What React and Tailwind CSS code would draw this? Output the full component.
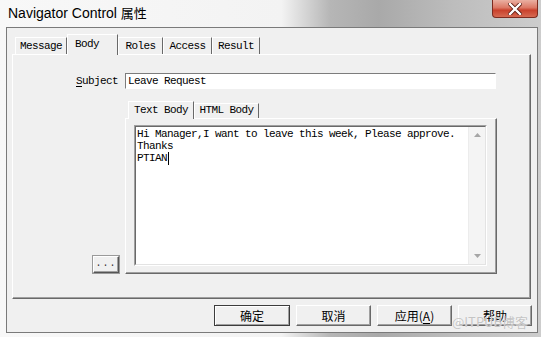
const mono = "font-['Liberation_Mono',monospace] text-[11px] tracking-[-0.6px]";
const cjk = "font-['Noto_Sans_CJK_SC',sans-serif] text-[12px]";

const tabs = [
  { label: "Message", w: "w-[52px]" },
  { label: "Body", w: "w-[51px]", active: true },
  { label: "Roles", w: "w-[45px]" },
  { label: "Access", w: "w-[49px]" },
  { label: "Result", w: "w-[48px]" },
];

function Tab({ label, w, active }) {
  if (active) {
    return (
      <div
        className={`${w} h-[21px] -mb-px relative z-10 bg-[#f0f0f0] border-t border-l border-white border-r border-r-[#696969] flex items-start pl-[7px] pt-[1px] ${mono} text-black`}
      >
        {label}
      </div>
    );
  }
  return (
    <div
      className={`${w} h-[17px] bg-[#f0f0f0] border-t border-l border-white border-r border-r-[#696969] flex items-center justify-center ${mono} text-black`}
    >
      {label}
    </div>
  );
}

function Button({ children, w, isDefault }) {
  return (
    <div
      className={`${w} h-[21px] flex items-center justify-center ${cjk} text-black bg-[#f0f0f0] ${
        isDefault
          ? "border border-[#3c3c3c] shadow-[inset_1px_1px_0_#ffffff,inset_-1px_-1px_0_#a0a0a0]"
          : "border-t border-l border-white border-b border-r border-b-[#696969] border-r-[#696969] shadow-[inset_-1px_-1px_0_#a0a0a0]"
      }`}
    >
      {children}
    </div>
  );
}

export default function App() {
  return (
    <div className="relative w-[541px] h-[337px] overflow-hidden bg-[linear-gradient(90deg,#f8f8f8_0%,#f3f3f3_52%,#b6b6b6_61%,#a9a9a9_70%,#bdbdbd_84%,#cdcdcd_100%)]">
      {/* title bar */}
      <div className="h-[27px] flex items-start pl-[8px] pt-[4px] text-black">
        <span className="font-['Liberation_Sans',sans-serif] text-[14px] leading-[18px]">
          Navigator Control&nbsp;
        </span>
        <span className="font-['Noto_Sans_CJK_SC',sans-serif] text-[13px] leading-[18px]">属性</span>
      </div>

      <div className="absolute top-0 right-[3px] w-[46px] h-[18px] rounded-b-[4px] border border-t-0 border-[#7d2b1f] bg-[linear-gradient(180deg,#eab0a2_0%,#dc7865_45%,#c9412c_60%,#d66a52_100%)] flex items-center justify-center">
        <svg width="14" height="12" viewBox="0 0 14 12">
          <path d="M2 1 L12 11 M12 1 L2 11" stroke="#5a1a10" strokeWidth="4" strokeLinecap="square" />
          <path d="M2 1 L12 11 M12 1 L2 11" stroke="#ffffff" strokeWidth="2.4" strokeLinecap="square" />
        </svg>
      </div>

      {/* dialog */}
      <div className="ml-[6px] w-[532px] h-[306px] border border-[#7a7a7a] bg-[#f0f0f0] flex flex-col">
        <div className="mt-[6px] h-[20px] pl-[8px] flex items-end">
          {tabs.map((t) => (
            <Tab key={t.label} {...t} />
          ))}
        </div>

        <div className="ml-[5px] w-[519px] h-[245px] border-t border-l border-white border-r border-b border-r-[#696969] border-b-[#696969] shadow-[inset_-1px_-1px_0_#a0a0a0] flex flex-col">
          <div className="pt-[18px] pl-[63px] flex items-center">
            <span className={`${mono} text-black`}>
              <span className="underline underline-offset-2">S</span>ubject
            </span>
            <div className="ml-[7px] w-[371px] h-[16px] bg-white border-t border-l border-[#7c7c7c] border-b border-r border-b-white border-r-white flex items-center pl-[2px]">
              <span className={`${mono} text-black`}>Leave Request</span>
            </div>
          </div>

          <div className="mt-[11px] pl-[80px] flex items-end">
            <div className="mb-[1px] w-[26px] h-[17px] bg-[#f0f0f0] border-t border-l border-white border-b border-r border-b-[#555555] border-r-[#555555] shadow-[inset_-1px_-1px_0_#a0a0a0,0_0_0_1px_#9a9a9a] flex items-center justify-center">
              <span className="font-['Liberation_Mono',monospace] text-[10px] leading-none text-[#333] tracking-[1px]">...</span>
            </div>

            <div className="ml-[6px] flex flex-col">
              <div className="h-[17px] pl-[3px] flex items-end">
                <div className={`w-[66px] h-[18px] -mb-px relative z-10 bg-[#f0f0f0] border-t border-l border-white border-r border-r-[#696969] flex items-start justify-center ${mono} text-black`}>
                  Text Body
                </div>
                <div className={`w-[65px] h-[15px] bg-[#f0f0f0] border-t border-l border-white border-r border-r-[#696969] flex items-center justify-center ${mono} text-black`}>
                  HTML Body
                </div>
              </div>

              <div className="w-[372px] h-[156px] border-t border-l border-white border-r border-b border-r-[#696969] border-b-[#696969] shadow-[inset_-1px_-1px_0_#a0a0a0] pl-[8px] pt-[6px]">
                <div className="w-[353px] h-[141px] border-t border-l border-[#a0a0a0] border-b border-r border-b-white border-r-white">
                  <div className="w-full h-full border-t border-l border-[#696969] border-b border-r border-b-[#e3e3e3] border-r-[#e3e3e3] bg-white flex">
                    <div className={`flex-1 pl-[1px] pt-[1px] ${mono} leading-[12px] text-black`}>
                      <div>Hi Manager,I want to leave this week, Please approve.</div>
                      <div>Thanks</div>
                      <div className="flex items-center">
                        PTIAN<span className="inline-block w-px h-[13px] bg-black ml-px" />
                      </div>
                    </div>
                    <div className="w-[17px] h-full bg-[#f4f4f4] border-l border-[#ececec] flex flex-col items-center justify-between py-[6px]">
                      <svg width="7" height="4" viewBox="0 0 7 4">
                        <path d="M0 4 L3.5 0 L7 4 Z" fill="#a6a6a6" />
                      </svg>
                      <svg width="7" height="4" viewBox="0 0 7 4">
                        <path d="M0 0 L3.5 4 L7 0 Z" fill="#a6a6a6" />
                      </svg>
                    </div>
                  </div>
                </div>
              </div>
            </div>
          </div>
        </div>

        <div className="mt-[6px] pr-[5px] flex justify-end gap-[6px]">
          <Button w="w-[76px]" isDefault>确定</Button>
          <Button w="w-[75px]">取消</Button>
          <Button w="w-[75px]">
            应用(<span className="underline underline-offset-2">A</span>)
          </Button>
          <Button w="w-[74px]">帮助</Button>
        </div>
      </div>

      <div className="absolute left-[452px] top-[312px] font-['Noto_Sans_CJK_SC',sans-serif] text-[13px] text-[#c4c4c4] [text-shadow:0_0_1px_#ffffff]">
        @ITPUB博客
      </div>
    </div>
  );
}
